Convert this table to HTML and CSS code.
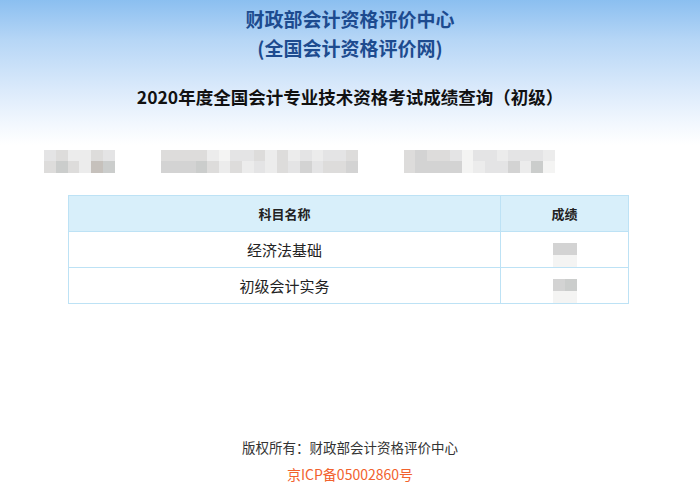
FILE: index.html
```html
<!DOCTYPE html>
<html lang="zh-CN">
<head>
<meta charset="utf-8">
<title>成绩查询</title>
<link rel="stylesheet" href="styles.css">
</head>
<body>
<div class="page">
  <header class="head">
    <h1 class="org">财政部会计资格评价中心<br>(全国会计资格评价网)</h1>
    <h2 class="subtitle">2020年度全国会计专业技术资格考试成绩查询（初级）</h2>
  </header>

  <div class="info-row">
    <div class="mosaic cols6">
      <i class="s2"></i><i class="s3"></i><i class="s1"></i><i class="s1"></i><i class="s3"></i><i class="s2"></i>
      <i class="s3"></i><i class="s5"></i><i class="s3"></i><i class="s1"></i><i class="s6"></i><i class="s5"></i>
    </div>
    <div class="mosaic cols17">
      <i class="s3"></i><i class="s3"></i><i class="s3"></i><i class="s3"></i><i class="s1"></i><i class="s0"></i><i class="s2"></i><i class="s2"></i><i class="s3"></i><i class="s1"></i><i class="s3"></i><i class="s1"></i><i class="s2"></i><i class="s1"></i><i class="s2"></i><i class="s2"></i><i class="s3"></i>
      <i class="s4"></i><i class="s4"></i><i class="s4"></i><i class="s5"></i><i class="s3"></i><i class="s1"></i><i class="s3"></i><i class="s1"></i><i class="s2"></i><i class="s1"></i><i class="s3"></i><i class="s2"></i><i class="s4"></i><i class="s2"></i><i class="s3"></i><i class="s3"></i><i class="s4"></i>
    </div>
    <div class="mosaic cols13">
      <i class="s3"></i><i class="s4"></i><i class="s3"></i><i class="s3"></i><i class="s2"></i><i class="s0"></i><i class="s2"></i><i class="s2"></i><i class="s1"></i><i class="s2"></i><i class="s2"></i><i class="s2"></i><i class="s1"></i>
      <i class="s3"></i><i class="s4"></i><i class="s4"></i><i class="s4"></i><i class="s4"></i><i class="s0"></i><i class="s1"></i><i class="s2"></i><i class="s2"></i><i class="s4"></i><i class="s1"></i><i class="s5"></i><i class="s0"></i>
    </div>
  </div>

  <table class="scores">
    <thead>
      <tr><th class="c-name">科目名称</th><th class="c-score">成绩</th></tr>
    </thead>
    <tbody>
      <tr>
        <td class="c-name">经济法基础</td>
        <td class="c-score"><span class="score-blur"><i class="s4"></i><i class="s4"></i><i class="s0"></i><i class="s0"></i></span></td>
      </tr>
      <tr>
        <td class="c-name">初级会计实务</td>
        <td class="c-score"><span class="score-blur"><i class="s4"></i><i class="s5"></i><i class="s0"></i><i class="s0"></i></span></td>
      </tr>
    </tbody>
  </table>

  <footer class="foot">
    <p class="copy">版权所有：财政部会计资格评价中心</p>
    <p class="icp">京ICP备05002860号</p>
  </footer>
</div>
</body>
</html>
```
FILE: styles.css
```css
html, body {
  margin: 0;
  padding: 0;
}
body {
  width: 700px;
  height: 487px;
  overflow: hidden;
  font-family: "Noto Sans CJK SC", "Microsoft YaHei", sans-serif;
  background: linear-gradient(to bottom, #8bbff0 0px, #b6d6f6 40px, #dbeafb 90px, #f3f8fe 125px, #ffffff 145px);
  color: #222;
}
.page {
  display: flex;
  flex-direction: column;
  align-items: center;
}
.head {
  text-align: center;
  padding-top: 4px;
}
.org {
  margin: 0;
  font-size: 19px;
  line-height: 29px;
  font-weight: bold;
  color: #1d4b8f;
}
.subtitle {
  margin: 20px 0 0;
  font-size: 17.5px;
  line-height: 30px;
  font-weight: bold;
  color: #111;
}
.info-row {
  align-self: stretch;
  display: flex;
  gap: 46px;
  padding-left: 44px;
  margin-top: 38px;
  height: 23px;
}
.mosaic {
  display: grid;
  grid-template-rows: 11px 12px;
  filter: blur(0.4px);
}
.mosaic.cols6 { grid-template-columns: repeat(6, 11.8px); }
.mosaic.cols17 { grid-template-columns: repeat(17, 11.6px); }
.mosaic.cols13 { grid-template-columns: repeat(13, 11.6px); }
.mosaic i, .score-blur i {
  display: block;
}
.s0 { background: #f4f4f3; }
.s1 { background: #ececec; }
.s2 { background: #e4e4e5; }
.s3 { background: #dddcdb; }
.s4 { background: #d3d3d3; }
.s5 { background: #cbcdcc; }
.s6 { background: #c6c1bc; }

.scores {
  align-self: flex-start;
  margin-top: 22px;
  margin-left: 68px;
  width: 561px;
  border-collapse: collapse;
  background: #fff;
}
.scores th, .scores td {
  border: 1px solid #bde2f5;
  text-align: center;
  padding: 0;
}
.scores th {
  background: #d8effa;
  height: 35px;
  font-size: 13px;
  font-weight: bold;
  color: #222;
}
.scores td {
  height: 35px;
  font-size: 15px;
  color: #222;
}
.c-name { width: 432px; }
.c-score { width: 127px; }
.score-blur {
  display: inline-grid;
  grid-template-columns: 12px 12px;
  grid-template-rows: 12px 12px;
  vertical-align: middle;
  margin-top: 10px;
  filter: blur(0.3px);
}
.foot {
  margin-top: 130px;
  text-align: center;
}
.foot p {
  margin: 0;
  line-height: 27px;
}
.copy { color: #333; font-size: 13.5px; }
.icp { color: #f2622e; font-size: 14px; }
```
